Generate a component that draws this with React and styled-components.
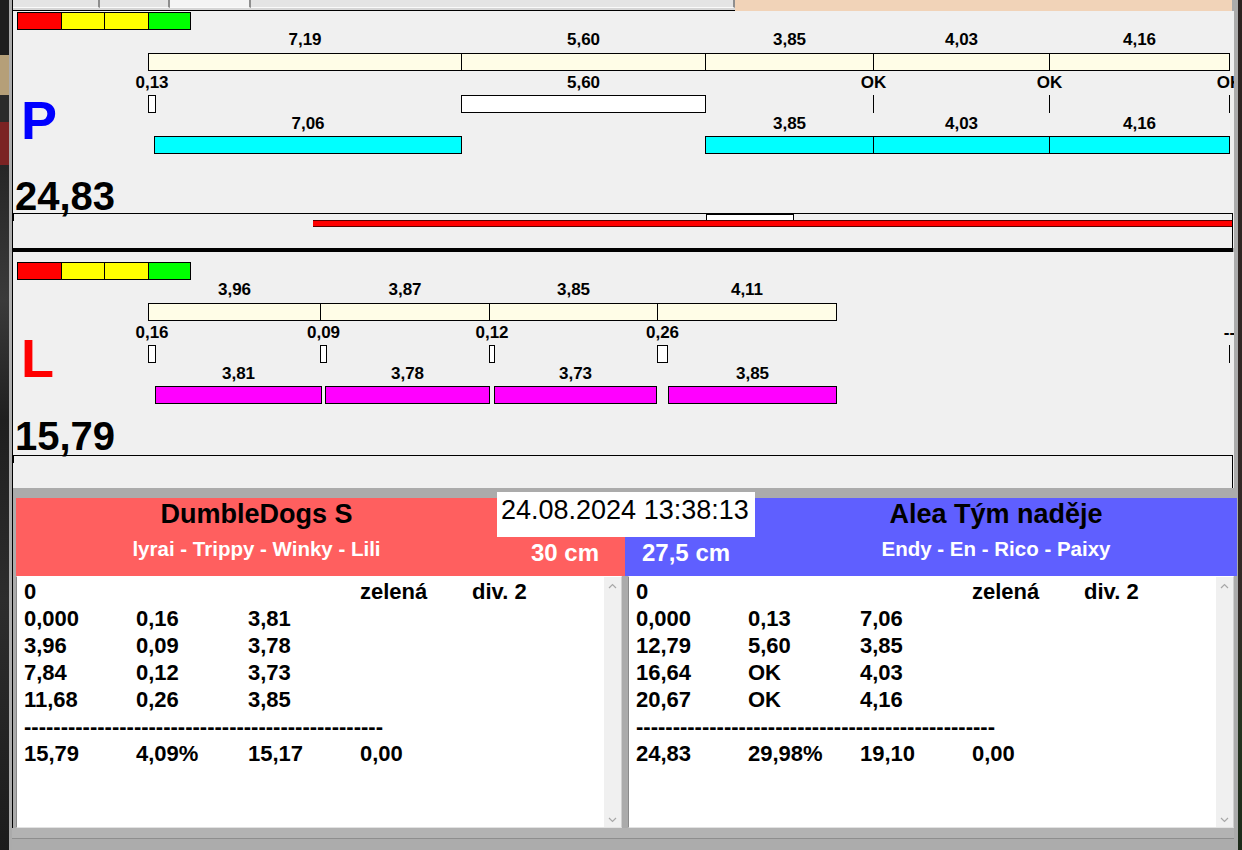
import React from "react";
import styled, { createGlobalStyle } from "styled-components";

const GlobalStyle = createGlobalStyle`
  html, body {
    margin: 0;
    padding: 0;
  }
  body {
    width: 1242px;
    height: 850px;
    overflow: hidden;
    background: #1b1b1b;
    font-family: "Liberation Sans", Arial, sans-serif;
  }
  * {
    box-sizing: border-box;
  }
`;

const FONT = `"Liberation Sans", Arial, sans-serif`;
const ORIGIN = 120; // page x where the chart canvas starts

const Screen = styled.div`
  display: flex;
  width: 1242px;
  height: 850px;
  overflow: hidden;
`;

const DesktopLeft = styled.div`
  flex: none;
  width: 9px;
  background: linear-gradient(
    180deg,
    #1d1d1d 0px,
    #1d1d1d 55px,
    #b59f78 55px,
    #b59f78 95px,
    #2a2a2a 95px,
    #2a2a2a 122px,
    #7b2323 122px,
    #7b2323 165px,
    #262626 165px,
    #3a3a3a 300px,
    #1f1f1f 420px,
    #2d2d2d 600px,
    #1c1c1c 850px
  );
`;

const DesktopRight = styled.div`
  flex: none;
  width: 4px;
  background: linear-gradient(180deg, #2b2321 0px, #332a27 600px, #24331f 730px, #1d2a1a 850px);
`;

const Frame = styled.div`
  flex: none;
  width: 1229px;
  padding: 0 4px 0 3px;
  background: #ababab;
`;

const Window = styled.div`
  display: flex;
  flex-direction: column;
  width: 1222px;
  height: 850px;
  border-left: 1px solid #000;
`;

/* ---------- tab strip ---------- */

const TabStrip = styled.div`
  display: flex;
  height: 11px;
  flex: none;
`;

const TabsArea = styled.div`
  display: flex;
  width: 722px;
  background: #d6d6d6;
  border-bottom: 1px solid #000;
`;

const Tab = styled.div`
  width: ${(p) => p.$w}px;
  height: 8px;
  background: ${(p) => (p.$active ? "#f4f4f4" : "#e4e4e4")};
  border-right: 2px solid #8e8e8e;
  border-bottom: 1px solid #fafafa;
`;

const PeachArea = styled.div`
  width: 497px;
  background: #f1d3b8;
`;

/* ---------- graph panels ---------- */

const GraphPanel = styled.div`
  flex: none;
  display: flex;
  flex-direction: column;
  padding-top: ${(p) => p.$pad}px;
  background: #f0f0f0;
`;

const Legend = styled.div`
  display: flex;
  height: 18px;
  margin-left: 4px;
`;

const LegendCell = styled.div`
  width: ${(p) => p.$w}px;
  height: 18px;
  margin-right: -1px;
  border: 1px solid #000;
  background: ${(p) => p.$color};
`;

const ChartRow = styled.div`
  display: flex;
  height: ${(p) => p.$h}px;
`;

const Side = styled.div`
  flex: none;
  width: ${ORIGIN - 13}px;
  display: flex;
  flex-direction: column;
`;

const BigLetter = styled.div`
  margin-top: ${(p) => p.$top}px;
  padding-left: 8px;
  font: bold 54px/54px ${FONT};
  color: ${(p) => p.$color};
`;

const Total = styled.div`
  margin-top: auto;
  margin-bottom: ${(p) => p.$bottom}px;
  padding-left: 2px;
  font: bold 40px/34px ${FONT};
  color: #000;
  white-space: nowrap;
`;

const Canvas = styled.div`
  position: relative;
  flex: 1;
  overflow: hidden;
`;

const Segment = styled.div`
  position: absolute;
  top: ${(p) => p.$top}px;
  height: 18px;
  border: 1px solid #000;
  background: ${(p) => p.$fill};
`;

const Tick = styled.div`
  position: absolute;
  top: ${(p) => p.$top}px;
  width: 1px;
  height: 18px;
  background: #000;
`;

const Label = styled.span`
  position: absolute;
  top: ${(p) => p.$top}px;
  transform: translateX(-50%);
  font: bold 17px/17px ${FONT};
  color: #000;
  white-space: nowrap;
`;

const Track = styled.div`
  position: relative;
  height: ${(p) => p.$h}px;
  margin-right: 1px;
  border-top: 1px solid #000;
  border-right: 1px solid #000;
  overflow: hidden;
`;

const TrackTick = styled.div`
  position: absolute;
  left: 0;
  top: 0;
  width: 1px;
  height: 7px;
  background: #000;
`;

const TrackBox = styled.div`
  position: absolute;
  top: -1px;
  height: 8px;
  border: 1px solid #000;
  border-top-width: 2px;
  background: #fff;
`;

const TrackBar = styled.div`
  position: absolute;
  top: 6px;
  height: 7px;
  border-top: 1px solid #5a0000;
  border-bottom: 1px solid #5a0000;
  background: #ff0000;
`;

const ThickRule = styled.div`
  flex: none;
  height: 4px;
  margin-right: 1px;
  background: #000;
`;

/* ---------- bottom section ---------- */

const BottomSection = styled.div`
  position: relative;
  flex: none;
  height: 340px;
  padding: 10px 0 0 3px;
  display: flex;
  flex-direction: column;
`;

const HeaderRow = styled.div`
  display: flex;
  height: 78px;
  width: 1221px;
`;

const TeamHeader = styled.div`
  display: flex;
  flex: none;
  width: ${(p) => p.$w}px;
  background: ${(p) => p.$bg};
`;

const NamesBlock = styled.div`
  flex: none;
  width: ${(p) => p.$w}px;
  display: flex;
  flex-direction: column;
  align-items: center;
`;

const TeamName = styled.div`
  font: bold 27px/32px ${FONT};
  color: #000;
  white-space: nowrap;
`;

const Members = styled.div`
  margin-top: 7px;
  font: bold 20.5px/24px ${FONT};
  color: #fff;
  white-space: nowrap;
`;

const SizeBlock = styled.div`
  flex: 1;
  display: flex;
  align-items: flex-end;
  justify-content: ${(p) => (p.$right ? "flex-end" : "flex-start")};
  padding: 0 ${(p) => (p.$right ? 26 : 0)}px 9px ${(p) => (p.$right ? 0 : 17)}px;
`;

const SizeText = styled.div`
  font: bold 24px/28px ${FONT};
  color: #fff;
  white-space: nowrap;
`;

const DateBox = styled.div`
  position: absolute;
  top: 4px;
  left: 484px;
  width: 258px;
  height: 45px;
  padding: 3px 0 0 4px;
  background: #fff;
  font: 27px/30px ${FONT};
  color: #000;
  white-space: nowrap;
`;

const ListsRow = styled.div`
  display: flex;
  gap: 6px;
  height: 252px;
`;

const ListBox = styled.div`
  display: flex;
  width: 606px;
  height: 252px;
  background: #fff;
  border-left: 1px solid #8a8a8a;
  border-top: 1px solid #fff;
  border-bottom: 1px solid #e2e2e2;
  border-right: 1px solid #cfcfcf;
`;

const ListBody = styled.div`
  flex: 1;
  padding: 1px 0 0 7px;
`;

const ListRow = styled.div`
  display: grid;
  grid-template-columns: repeat(5, 112px);
  height: 27px;
  font: bold 22px/27px ${FONT};
  color: #000;
  white-space: nowrap;
`;

const DashLine = styled.div`
  height: 27px;
  font: bold 22px/27px ${FONT};
  color: #000;
  white-space: nowrap;
  overflow: hidden;
`;

const Scrollbar = styled.div`
  flex: none;
  width: 17px;
  display: flex;
  flex-direction: column;
  justify-content: space-between;
  align-items: center;
  padding: 6px 0 4px;
  background: #f0f0f0;
`;

const StatusBar = styled.div`
  flex: none;
  height: 22px;
  margin-left: -1px;
  background: linear-gradient(180deg, #b3b3b3 0px, #b3b3b3 10px, #8e8e8e 10px, #8e8e8e 11px, #acacac 11px);
`;

/* ---------- data ---------- */

const CREAM = "#fffde7";

const panels = [
  {
    letter: "P",
    color: "#0000ff",
    letterTop: 63,
    total: "24,83",
    totalBottom: 0,
    pad: 1,
    chartH: 183,
    trackH: 35,
    layers: [
      {
        fill: CREAM,
        items: [
          [148, 461, "7,19"],
          [461, 705, "5,60"],
          [705, 873, "3,85"],
          [873, 1049, "4,03"],
          [1049, 1229, "4,16"],
        ],
      },
      {
        fill: "#ffffff",
        items: [
          [148, 155, "0,13"],
          [461, 705, "5,60"],
          [873, 873, "OK"],
          [1049, 1049, "OK"],
          [1229, 1229, "OK"],
        ],
      },
      {
        fill: "#00ffff",
        items: [
          [154, 461, "7,06"],
          [705, 873, "3,85"],
          [873, 1049, "4,03"],
          [1049, 1229, "4,16"],
        ],
      },
    ],
    track: { box: [706, 793], bar: [313, 1233] },
  },
  {
    letter: "L",
    color: "#ff0000",
    letterTop: 51,
    total: "15,79",
    totalBottom: 2,
    pad: 10,
    chartH: 175,
    trackH: 33,
    layers: [
      {
        fill: CREAM,
        items: [
          [148, 320, "3,96"],
          [320, 489, "3,87"],
          [489, 657, "3,85"],
          [657, 836, "4,11"],
        ],
      },
      {
        fill: "#ffffff",
        items: [
          [148, 155, "0,16"],
          [320, 326, "0,09"],
          [489, 494, "0,12"],
          [657, 667, "0,26"],
          [1229, 1229, "--"],
        ],
      },
      {
        fill: "#ff00ff",
        items: [
          [155, 321, "3,81"],
          [325, 489, "3,78"],
          [494, 656, "3,73"],
          [668, 836, "3,85"],
        ],
      },
    ],
    track: null,
  },
];

const LAYER_TOPS = [
  { label: 1, bar: 23 },
  { label: 44, bar: 65 },
  { label: 85, bar: 106 },
];

const legend = [
  ["#ff0000", 45],
  ["#ffff00", 44],
  ["#ffff00", 45],
  ["#00ff00", 43],
];

const teams = [
  {
    name: "DumbleDogs S",
    members: "lyrai - Trippy - Winky - Lili",
    size: "30 cm",
    bg: "#ff5f5f",
    w: 609,
    namesW: 481,
    sizeFirst: false,
    rows: [
      ["0", "", "", "zelená", "div. 2"],
      ["0,000", "0,16", "3,81"],
      ["3,96", "0,09", "3,78"],
      ["7,84", "0,12", "3,73"],
      ["11,68", "0,26", "3,85"],
    ],
    sum: ["15,79", "4,09%", "15,17", "0,00"],
  },
  {
    name: "Alea Tým naděje",
    members: "Endy - En - Rico - Paixy",
    size: "27,5 cm",
    bg: "#5f5fff",
    w: 612,
    namesW: 482,
    sizeFirst: true,
    rows: [
      ["0", "", "", "zelená", "div. 2"],
      ["0,000", "0,13", "7,06"],
      ["12,79", "5,60", "3,85"],
      ["16,64", "OK", "4,03"],
      ["20,67", "OK", "4,16"],
    ],
    sum: ["24,83", "29,98%", "19,10", "0,00"],
  },
];

/* ---------- parts ---------- */

function Chevron({ down }) {
  return (
    <svg width="9" height="6" viewBox="0 0 9 6">
      <path
        d={down ? "M1 1 L4.5 4.5 L8 1" : "M1 5 L4.5 1.5 L8 5"}
        fill="none"
        stroke="#a8a8a8"
        strokeWidth="1.2"
      />
    </svg>
  );
}

function GraphBlock({ panel }) {
  return (
    <GraphPanel $pad={panel.pad}>
      <Legend>
        {legend.map(([c, w], i) => (
          <LegendCell key={i} $color={c} $w={w} />
        ))}
      </Legend>
      <ChartRow $h={panel.chartH}>
        <Side>
          <BigLetter $top={panel.letterTop} $color={panel.color}>
            {panel.letter}
          </BigLetter>
          <Total $bottom={panel.totalBottom}>{panel.total}</Total>
        </Side>
        <Canvas>
          {panel.layers.map((layer, li) =>
            layer.items.map(([x1, x2, text], i) => {
              const tops = LAYER_TOPS[li];
              const left = x1 - ORIGIN;
              const center = (x1 + x2 + 1) / 2 - ORIGIN;
              return (
                <React.Fragment key={`${li}-${i}`}>
                  <Label $top={tops.label} style={{ left: center }}>
                    {text}
                  </Label>
                  {x2 > x1 ? (
                    <Segment
                      $top={tops.bar}
                      $fill={layer.fill}
                      style={{ left, width: x2 - x1 + 1 }}
                    />
                  ) : (
                    <Tick $top={tops.bar} style={{ left }} />
                  )}
                </React.Fragment>
              );
            })
          )}
        </Canvas>
      </ChartRow>
      <Track $h={panel.trackH}>
        <TrackTick />
        {panel.track && (
          <>
            <TrackBox
              style={{
                left: panel.track.box[0] - 13,
                width: panel.track.box[1] - panel.track.box[0] + 1,
              }}
            />
            <TrackBar
              style={{
                left: panel.track.bar[0] - 13,
                width: panel.track.bar[1] - panel.track.bar[0] + 1,
              }}
            />
          </>
        )}
      </Track>
    </GraphPanel>
  );
}

function TeamHead({ team }) {
  const names = (
    <NamesBlock $w={team.namesW}>
      <TeamName>{team.name}</TeamName>
      <Members>{team.members}</Members>
    </NamesBlock>
  );
  const size = (
    <SizeBlock $right={!team.sizeFirst}>
      <SizeText>{team.size}</SizeText>
    </SizeBlock>
  );
  return (
    <TeamHeader $bg={team.bg} $w={team.w}>
      {team.sizeFirst ? size : names}
      {team.sizeFirst ? names : size}
    </TeamHeader>
  );
}

function ResultList({ team }) {
  return (
    <ListBox>
      <ListBody>
        {team.rows.map((row, i) => (
          <ListRow key={i}>
            {row.map((c, j) => (
              <span key={j}>{c}</span>
            ))}
          </ListRow>
        ))}
        <DashLine>{"-".repeat(49)}</DashLine>
        <ListRow>
          {team.sum.map((c, j) => (
            <span key={j}>{c}</span>
          ))}
        </ListRow>
      </ListBody>
      <Scrollbar>
        <Chevron />
        <Chevron down />
      </Scrollbar>
    </ListBox>
  );
}

export default function App() {
  return (
    <>
      <GlobalStyle />
      <Screen>
        <DesktopLeft />
        <Frame>
          <Window>
            <TabStrip>
              <TabsArea>
                <Tab $w={87} />
                <Tab $w={70} />
                <Tab $w={81} $active />
                <Tab $w={484} />
              </TabsArea>
              <PeachArea />
            </TabStrip>
            <GraphBlock panel={panels[0]} />
            <ThickRule />
            <GraphBlock panel={panels[1]} />
            <BottomSection>
              <HeaderRow>
                {teams.map((t) => (
                  <TeamHead key={t.name} team={t} />
                ))}
              </HeaderRow>
              <ListsRow>
                {teams.map((t) => (
                  <ResultList key={t.name} team={t} />
                ))}
              </ListsRow>
              <DateBox>24.08.2024 13:38:13</DateBox>
            </BottomSection>
            <StatusBar />
          </Window>
        </Frame>
        <DesktopRight />
      </Screen>
    </>
  );
}
